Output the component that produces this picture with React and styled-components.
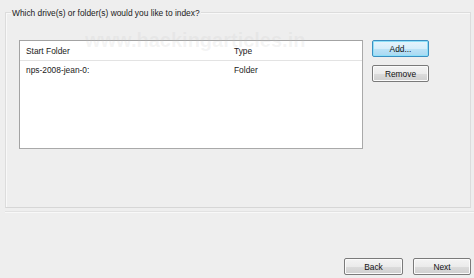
import React from 'react';
import styled, { createGlobalStyle } from 'styled-components';

const Global = createGlobalStyle`
  html, body {
    margin: 0;
    padding: 0;
    background: #eeeeee;
  }
  body {
    font-family: "Liberation Sans", Arial, sans-serif;
    font-size: 8.4px;
    color: #1a1a1a;
  }
`;

const Page = styled.div`
  position: relative;
  width: 474px;
  height: 278px;
  display: flex;
  flex-direction: column;
  overflow: hidden;
`;

const Panel = styled.div`
  margin: 12px 3px 0 5px;
  height: 194px;
  border: 1px solid #dcdcdc;
  border-bottom-color: #d6d6d6;
  box-shadow: inset 1px 1px 0 #f8f8f8;
  display: flex;
  flex-direction: column;
`;

const Title = styled.div`
  align-self: flex-start;
  margin: -5px 0 0 5px;
  padding: 0 1px;
  background: #eeeeee;
  line-height: 10px;
`;

const Body = styled.div`
  display: flex;
  gap: 9px;
  padding: 22px 0 0 13px;
`;

const List = styled.div`
  width: 342px;
  height: 107px;
  background: #fff;
  border: 1px solid #a3a3a3;
  border-right-color: #a9a9a9;
  border-bottom-color: #a9a9a9;
`;

const Row = styled.div`
  display: flex;
  height: ${p => (p.$head ? '19px' : '17px')};
  align-items: center;
  border-bottom: ${p => (p.$head ? '1px solid #e3e3e3' : 'none')};
`;

const Cell = styled.div`
  width: ${p => p.$w}px;
  padding-left: 6px;
  box-sizing: border-box;
  white-space: nowrap;
`;

const Buttons = styled.div`
  display: flex;
  flex-direction: column;
  gap: 8px;
`;

const Button = styled.button`
  width: ${p => p.$w || 57}px;
  height: 17px;
  padding: 0;
  font-family: "Liberation Sans", Arial, sans-serif;
  font-size: 8.4px;
  color: #111;
  border-radius: 2px;
  border: 1px solid ${p => (p.$focus ? '#3b8fc2' : '#7a7a7a')};
  background: ${p =>
    p.$focus
      ? 'linear-gradient(#e6f4fc 0%, #d6eefb 50%, #bde3f7 51%, #a9d9f2 100%)'
      : 'linear-gradient(#f4f4f4 0%, #ebebeb 50%, #dcdcdc 51%, #cfcfcf 100%)'};
  box-shadow: inset 0 0 0 1px ${p => (p.$focus ? '#8fe0f8' : '#fbfbfb')};
`;

const Divider = styled.div`
  margin: 3px 0 0 5px;
  border-top: 1px solid #e2e2e2;
  border-bottom: 1px solid #f8f8f8;
`;

const Footer = styled.div`
  flex: 1;
  display: flex;
  justify-content: flex-end;
  align-items: flex-end;
  gap: 10px;
  padding: 0 3px 3px 0;
`;

const Watermark = styled.div`
  position: absolute;
  left: 85px;
  top: 29px;
  font-size: 20px;
  font-weight: bold;
  color: rgba(190, 190, 190, 0.16);
  pointer-events: none;
  white-space: nowrap;
`;

export default function App() {
  return (
    <>
      <Global />
      <Page>
        <Panel>
          <Title>Which drive(s) or folder(s) would you like to index?</Title>
          <Body>
            <List>
              <Row $head>
                <Cell $w={208}>Start Folder</Cell>
                <Cell $w={120}>Type</Cell>
              </Row>
              <Row>
                <Cell $w={208}>nps-2008-jean-0:</Cell>
                <Cell $w={120}>Folder</Cell>
              </Row>
            </List>
            <Buttons>
              <Button $focus>Add...</Button>
              <Button>Remove</Button>
            </Buttons>
          </Body>
        </Panel>
        <Divider />
        <Footer>
          <Button $w={59}>Back</Button>
          <Button $w={58}>Next</Button>
        </Footer>
        <Watermark>www.hackingarticles.in</Watermark>
      </Page>
    </>
  );
}
